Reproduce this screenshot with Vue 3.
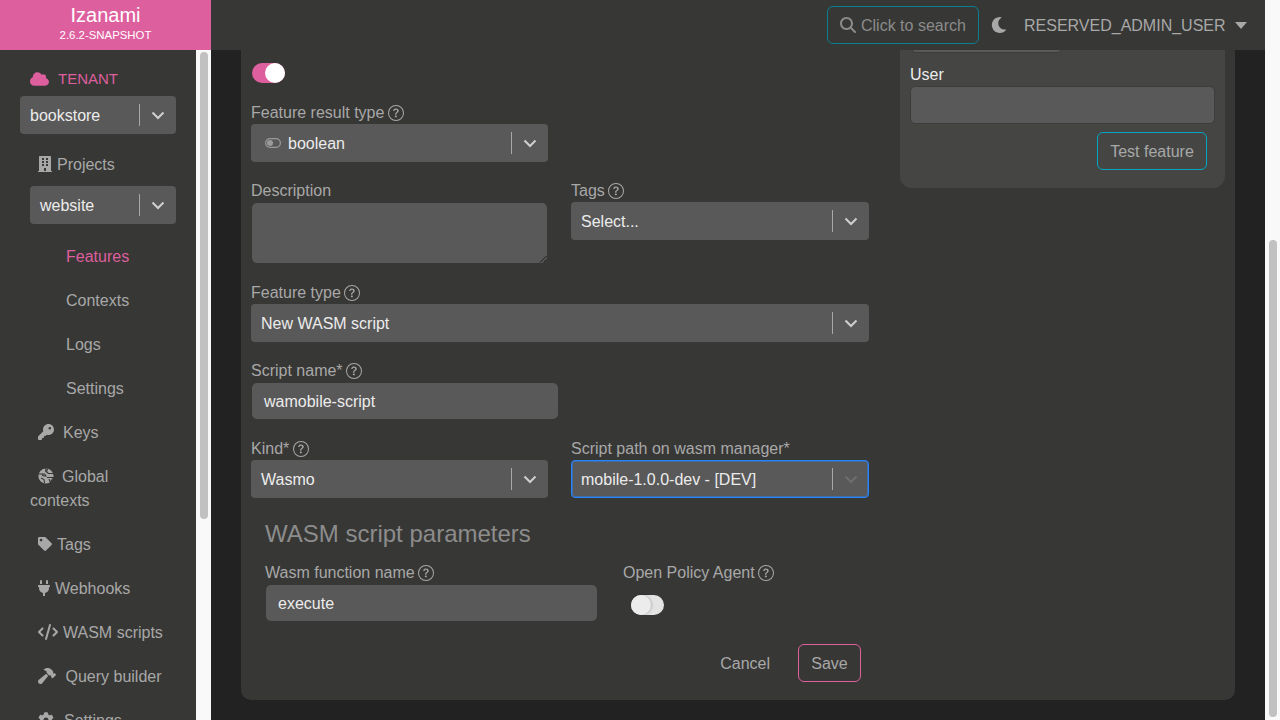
<script setup>
const ICONS = {
  building: { box: '0 0 448 512', d: 'M436 480h-20V24c0-13.255-10.745-24-24-24H56C42.745 0 32 10.745 32 24v456H12c-6.627 0-12 5.373-12 12v20h448v-20c0-6.627-5.373-12-12-12zM128 76c0-6.627 5.373-12 12-12h40c6.627 0 12 5.373 12 12v40c0 6.627-5.373 12-12 12h-40c-6.627 0-12-5.373-12-12V76zm0 96c0-6.627 5.373-12 12-12h40c6.627 0 12 5.373 12 12v40c0 6.627-5.373 12-12 12h-40c-6.627 0-12-5.373-12-12v-40zm52 148h-40c-6.627 0-12-5.373-12-12v-40c0-6.627 5.373-12 12-12h40c6.627 0 12 5.373 12 12v40c0 6.627-5.373 12-12 12zm76 160h-64v-84c0-6.627 5.373-12 12-12h40c6.627 0 12 5.373 12 12v84zm64-172c0 6.627-5.373 12-12 12h-40c-6.627 0-12-5.373-12-12v-40c0-6.627 5.373-12 12-12h40c6.627 0 12 5.373 12 12v40zm0-96c0 6.627-5.373 12-12 12h-40c-6.627 0-12-5.373-12-12v-40c0-6.627 5.373-12 12-12h40c6.627 0 12 5.373 12 12v40zm0-96c0 6.627-5.373 12-12 12h-40c-6.627 0-12-5.373-12-12V76c0-6.627 5.373-12 12-12h40c6.627 0 12 5.373 12 12v40z' },
  key: { box: '0 0 512 512', d: 'M336 352c97.2 0 176-78.8 176-176S433.2 0 336 0S160 78.8 160 176c0 18.7 2.9 36.8 8.3 53.7L7 391c-4.5 4.5-7 10.6-7 17v80c0 13.3 10.7 24 24 24h80c13.3 0 24-10.7 24-24V448h40c13.3 0 24-10.7 24-24V384h40c6.4 0 12.5-2.5 17-7l33.3-33.3c16.9 5.4 35 8.3 53.7 8.3zM376 96a40 40 0 1 1 0 80 40 40 0 1 1 0-80z' },
  tag: { box: '0 0 512 512', d: 'M0 252.118V48C0 21.49 21.49 0 48 0h204.118a48 48 0 0 1 33.941 14.059l211.882 211.882c18.745 18.745 18.745 49.137 0 67.882L293.823 497.941c-18.745 18.745-49.137 18.745-67.882 0L14.059 286.059A48 48 0 0 1 0 252.118zM112 64c-26.51 0-48 21.49-48 48s21.49 48 48 48 48-21.49 48-48-21.49-48-48-48z' },
  plug: { box: '0 0 384 512', d: 'M320,32a32,32,0,0,0-64,0v96h64Zm48,128H16A16,16,0,0,0,0,176v32a16,16,0,0,0,16,16H32v32A160.07,160.07,0,0,0,160,412.8V512h64V412.8A160.07,160.07,0,0,0,352,256V224h16a16,16,0,0,0,16-16V176A16,16,0,0,0,368,160ZM128,32a32,32,0,0,0-64,0v96h64Z' },
  code: { box: '0 0 640 512', d: 'M392.8 1.2c-17-4.9-34.7 5-39.6 22l-128 448c-4.9 17 5 34.7 22 39.6s34.7-5 39.6-22l128-448c4.9-17-5-34.7-22-39.6zm80.6 120.1c-12.5 12.5-12.5 32.8 0 45.3L562.7 256l-89.4 89.4c-12.5 12.5-12.5 32.8 0 45.3s32.8 12.5 45.3 0l112-112c12.5-12.5 12.5-32.8 0-45.3l-112-112c-12.5-12.5-32.8-12.5-45.3 0zm-306.7 0c-12.5-12.5-32.8-12.5-45.3 0l-112 112c-12.5 12.5-12.5 32.8 0 45.3l112 112c12.5 12.5 32.8 12.5 45.3 0s12.5-32.8 0-45.3L77.3 256l89.4-89.4c12.5-12.5 12.5-32.8 0-45.3z' },
  hammer: { box: '0 0 576 512', d: 'M413.5 237.5c-28.2 4.8-58.2-3.6-80-25.4l-38.1-38.1C280.4 159 272 138.8 272 117.6V105.5L192.3 62c-5.3-2.9-8.6-8.6-8.3-14.7s3.9-11.5 9.5-14l47.2-21C259.1 4.2 279 0 299.2 0h18.1c36.7 0 72 14 98.7 39.1l44.6 42c24.2 22.8 33.2 55.7 26.6 86L503 183l8-8c9.4-9.4 24.6-9.4 33.9 0l24 24c9.4 9.4 9.4 24.6 0 33.9l-88 88c-9.4 9.4-24.6 9.4-33.9 0l-24-24c-9.4-9.4-9.4-24.6 0-33.9l8-8-17.5-17.5zM27.4 377.1L260.9 182.6c3.5 4.9 7.5 9.6 11.8 14l38.1 38.1c6 6 12.4 11.2 19.2 15.7L134.9 484.6c-14.5 17.4-36 27.4-58.6 27.4C34.1 512 0 477.8 0 435.7c0-22.6 10.1-44.1 27.4-58.6z' },
  gear: { box: '0 0 512 512', d: 'M487.4 315.7l-42.6-24.6c4.3-23.2 4.3-47 0-70.2l42.6-24.6c4.9-2.8 7.1-8.6 5.5-14-11.1-35.6-30-67.8-54.7-94.6-3.8-4.1-10-5.1-14.8-2.3L380.8 110c-17.9-15.4-38.5-27.3-60.8-35.1V25.8c0-5.6-3.9-10.5-9.4-11.7-36.7-8.2-74.3-7.8-109.2 0-5.5 1.2-9.4 6.1-9.4 11.7V75c-22.2 7.9-42.8 19.8-60.8 35.1L88.7 85.5c-4.9-2.8-11-1.9-14.8 2.3-24.7 26.7-43.6 58.9-54.7 94.6-1.7 5.4.6 11.2 5.5 14L67.3 221c-4.3 23.2-4.3 47 0 70.2l-42.6 24.6c-4.9 2.8-7.1 8.6-5.5 14 11.1 35.6 30 67.8 54.7 94.6 3.8 4.1 10 5.1 14.8 2.3l42.6-24.6c17.9 15.4 38.5 27.3 60.8 35.1v49.2c0 5.6 3.9 10.5 9.4 11.7 36.7 8.2 74.3 7.8 109.2 0 5.5-1.2 9.4-6.1 9.4-11.7v-49.2c22.2-7.9 42.8-19.8 60.8-35.1l42.6 24.6c4.9 2.8 11 1.9 14.8-2.3 24.7-26.7 43.6-58.9 54.7-94.6 1.5-5.5-.7-11.3-5.6-14.1zM256 336c-44.1 0-80-35.9-80-80s35.9-80 80-80 80 35.9 80 80-35.9 80-80 80z' }
}

const cloud = 'M0 336c0 79.5 64.5 144 144 144H512c70.7 0 128-57.3 128-128c0-61.9-44-113.6-102.4-125.4c4.1-10.7 6.4-22.4 6.4-34.6c0-53-43-96-96-96c-19.7 0-38.1 6-53.3 16.2C367 64.2 315.3 32 256 32C167.6 32 96 103.6 96 192c0 2.7 .1 5.4 .2 8.1C40.2 219.8 0 273.2 0 336z'
const search = 'M416 208c0 45.9-14.9 88.3-40 122.7L502.6 457.4c12.5 12.5 12.5 32.8 0 45.3s-32.8 12.5-45.3 0L330.7 376c-34.4 25.2-76.8 40-122.7 40C93.1 416 0 322.9 0 208S93.1 0 208 0S416 93.1 416 208zM208 352a144 144 0 1 0 0-288 144 144 0 1 0 0 288z'
const moon = 'M283.211 512c78.962 0 151.079-35.925 198.857-94.792 7.068-8.708-.639-21.43-11.562-19.35-124.203 23.654-238.262-71.576-238.262-196.954 0-72.222 38.662-138.635 101.498-174.394 9.686-5.512 7.25-20.197-3.756-22.23A258.156 258.156 0 0 0 283.211 0c-141.309 0-256 114.511-256 256 0 141.309 114.511 256 256 256z'
const helpRing = 'M8 15A7 7 0 1 1 8 1a7 7 0 0 1 0 14zm0 1A8 8 0 1 0 8 0a8 8 0 0 0 0 16z'
const helpMark = 'M5.255 5.786a.237.237 0 0 0 .241.247h.825c.138 0 .248-.113.266-.25.09-.656.54-1.134 1.342-1.134.686 0 1.314.343 1.314 1.168 0 .635-.374.927-.965 1.371-.673.489-1.206 1.06-1.168 1.987l.003.217a.25.25 0 0 0 .25.246h.811a.25.25 0 0 0 .25-.25v-.105c0-.718.273-.927 1.01-1.486.609-.463 1.244-.977 1.244-2.056 0-1.511-1.276-2.241-2.673-2.241-1.267 0-2.655.59-2.75 2.286zm1.557 5.763c0 .533.425.927 1.01.927.609 0 1.028-.394 1.028-.927 0-.552-.42-.94-1.029-.94-.584 0-1.009.388-1.009.94z'

const subLinks = ['Features', 'Contexts', 'Logs', 'Settings']
const navLinks = [
  { label: 'Tags', icon: 'tag', gap: 5, small: true },
  { label: 'Webhooks', icon: 'plug', gap: 5 },
  { label: 'WASM scripts', icon: 'code', gap: 5 },
  { label: 'Query builder', icon: 'hammer', gap: 9.5 },
  { label: 'Settings', icon: 'gear', gap: 10 }
]
</script>

<template>
  <div class="page">
    <aside class="left">
      <div class="brand">
        <div class="brand-name">Izanami</div>
        <div class="brand-version">2.6.2-SNAPSHOT</div>
      </div>
      <div class="left-body">
        <nav class="nav">
          <div class="tenant-title">
            <svg class="cloud" viewBox="0 0 640 512"><path :d="cloud" /></svg>
            TENANT
          </div>
          <div class="select tenant-select">
            <span class="select-value">bookstore</span>
            <span class="select-sep"></span>
            <svg class="chevron" viewBox="0 0 20 20"><path d="M4.5 7.5 10 13l5.5-5.5" /></svg>
          </div>
          <a class="nav-item">
            <svg class="nav-icon" :viewBox="ICONS.building.box"><path :d="ICONS.building.d" /></svg>
            <span class="gap-5">Projects</span>
          </a>
          <div class="select project-select">
            <span class="select-value">website</span>
            <span class="select-sep"></span>
            <svg class="chevron" viewBox="0 0 20 20"><path d="M4.5 7.5 10 13l5.5-5.5" /></svg>
          </div>
          <div class="sub-links">
            <a v-for="(link, i) in subLinks" :key="link" class="sub-link" :class="{ active: i === 0 }">{{ link }}</a>
          </div>
          <a class="nav-item">
            <svg class="nav-icon" :viewBox="ICONS.key.box"><path :d="ICONS.key.d" /></svg>
            <span class="gap-9">Keys</span>
          </a>
          <a class="nav-item wrap">
            <svg class="nav-icon globe" viewBox="0 0 16 16">
              <circle cx="8" cy="8" r="7.6" />
              <path class="globe-cut" d="M1 6h5.5l1.5 2H5.5L4 6.5M9.5 1l-1 3 2 1.5h5M9 9.5h6.5l-3.2 4.6L11 11M3 10l3 1.5.5 3.5M7.8 0v4" />
            </svg><span class="gap-8">Global</span> contexts
          </a>
          <a v-for="link in navLinks" :key="link.label" class="nav-item">
            <svg class="nav-icon" :class="{ small: link.small }" :viewBox="ICONS[link.icon].box"><path :d="ICONS[link.icon].d" /></svg>
            <span :style="{ marginLeft: link.gap + 'px' }">{{ link.label }}</span>
          </a>
        </nav>
        <div class="scroll-track side-track"><div class="thumb side-thumb"></div></div>
      </div>
    </aside>

    <div class="right">
      <header class="topbar">
        <button class="search-btn">
          <svg class="search-icon" viewBox="0 0 512 512"><path :d="search" /></svg>
          Click to search
        </button>
        <svg class="moon" viewBox="0 0 512 512"><path :d="moon" /></svg>
        <span class="user">RESERVED_ADMIN_USER</span>
        <span class="caret"></span>
      </header>

      <main class="content">
        <div class="card">
          <form class="form" @submit.prevent>
            <span class="toggle on"><span class="knob"></span></span>

            <label class="label first">Feature result type
              <svg class="help" viewBox="0 0 16 16"><path :d="helpRing" /><path :d="helpMark" /></svg>
            </label>
            <div class="half">
              <div class="select">
                <svg class="toggle-icon" viewBox="0 0 16 10">
                  <rect x="0.6" y="0.6" width="14.8" height="8.8" rx="4.4" />
                  <circle cx="5" cy="5" r="3" />
                </svg>
                <span class="select-value">boolean</span>
                <span class="select-sep"></span>
                <svg class="chevron" viewBox="0 0 20 20"><path d="M4.5 7.5 10 13l5.5-5.5" /></svg>
              </div>
            </div>

            <div class="two-cols row-desc">
              <div>
                <label class="label">Description</label>
                <div class="textarea">
                  <svg class="grip" viewBox="0 0 8 8"><path d="M7.5 1 1 7.5M7.5 4.5 4.5 7.5" /></svg>
                </div>
              </div>
              <div>
                <label class="label">Tags
                  <svg class="help" viewBox="0 0 16 16"><path :d="helpRing" /><path :d="helpMark" /></svg>
                </label>
                <div class="select">
                  <span class="select-value">Select...</span>
                  <span class="select-sep"></span>
                  <svg class="chevron" viewBox="0 0 20 20"><path d="M4.5 7.5 10 13l5.5-5.5" /></svg>
                </div>
              </div>
            </div>

            <label class="label row-type">Feature type
              <svg class="help" viewBox="0 0 16 16"><path :d="helpRing" /><path :d="helpMark" /></svg>
            </label>
            <div class="select">
              <span class="select-value">New WASM script</span>
              <span class="select-sep"></span>
              <svg class="chevron" viewBox="0 0 20 20"><path d="M4.5 7.5 10 13l5.5-5.5" /></svg>
            </div>

            <label class="label row-name">Script name*
              <svg class="help" viewBox="0 0 16 16"><path :d="helpRing" /><path :d="helpMark" /></svg>
            </label>
            <div class="input name-input">wamobile-script</div>

            <div class="two-cols row-kind">
              <div>
                <label class="label">Kind*
                  <svg class="help" viewBox="0 0 16 16"><path :d="helpRing" /><path :d="helpMark" /></svg>
                </label>
                <div class="select">
                  <span class="select-value">Wasmo</span>
                  <span class="select-sep"></span>
                  <svg class="chevron" viewBox="0 0 20 20"><path d="M4.5 7.5 10 13l5.5-5.5" /></svg>
                </div>
              </div>
              <div>
                <label class="label">Script path on wasm manager*</label>
                <div class="select focused">
                  <span class="select-value">mobile-1.0.0-dev - [DEV]</span>
                  <span class="select-sep"></span>
                  <svg class="chevron dim" viewBox="0 0 20 20"><path d="M4.5 7.5 10 13l5.5-5.5" /></svg>
                </div>
              </div>
            </div>

            <fieldset class="params">
              <h5 class="params-title">WASM script parameters</h5>
              <div class="params-row">
                <div class="param-fn">
                  <label class="label">Wasm function name
                    <svg class="help" viewBox="0 0 16 16"><path :d="helpRing" /><path :d="helpMark" /></svg>
                  </label>
                  <div class="input fn-input">execute</div>
                </div>
                <div>
                  <label class="label">Open Policy Agent
                    <svg class="help" viewBox="0 0 16 16"><path :d="helpRing" /><path :d="helpMark" /></svg>
                  </label>
                  <span class="toggle off"><span class="knob"></span></span>
                </div>
              </div>
            </fieldset>

            <div class="actions">
              <button class="btn-cancel" type="button">Cancel</button>
              <button class="btn-save" type="submit">Save</button>
            </div>
          </form>

          <section class="test-panel">
            <div class="input cut-input"></div>
            <label class="user-label">User</label>
            <div class="input user-input"></div>
            <div class="test-actions">
              <button class="btn-test" type="button">Test feature</button>
            </div>
          </section>
        </div>
      </main>
    </div>

    <div class="scroll-track body-track"><div class="thumb body-thumb"></div></div>
  </div>
</template>

<style>
html,
body {
  margin: 0;
  overflow: hidden;
}
</style>

<style scoped>
.page {
  display: flex;
  width: 1280px;
  height: 720px;
  overflow: hidden;
  background: #222222;
  font-family: 'Liberation Sans', Arial, sans-serif;
  font-size: 16px;
  line-height: 24px;
  color: #a8a8a8;
}
.left {
  width: 211px;
  flex: none;
  display: flex;
  flex-direction: column;
}
.brand {
  height: 50px;
  background: #de5f9e;
  color: #fff;
  text-align: center;
}
.brand-name {
  font-size: 20px;
  line-height: 24px;
  padding-top: 3px;
}
.brand-version {
  font-size: 11.4px;
  line-height: 14px;
  margin-top: 1px;
}
.left-body {
  flex: 1;
  min-height: 0;
  display: flex;
}
.nav {
  width: 196px;
  background: #373735;
  padding: 17px 20px 0 20px;
  box-sizing: border-box;
  overflow: hidden;
}
.tenant-title {
  display: flex;
  align-items: center;
  height: 24px;
  padding-left: 10px;
  color: #de5f9e;
  margin-bottom: 5px;
  font-size: 15px;
}
.cloud {
  width: 19px;
  height: 16px;
  fill: #de5f9e;
  margin-right: 9px;
}
.select {
  display: flex;
  align-items: center;
  height: 38px;
  box-sizing: border-box;
  background: #595959;
  border-radius: 4px;
  padding-left: 10px;
  color: #ececec;
}
.select-value {
  flex: 1;
  white-space: nowrap;
  padding-top: 2px;
}
.select-sep {
  width: 1px;
  height: 22px;
  background: #a8a8a8;
  flex: none;
}
.chevron {
  width: 20px;
  height: 20px;
  margin: 0 8.5px 0 7.5px;
  flex: none;
  fill: none;
  stroke: #cfcfcf;
  stroke-width: 2;
}
.chevron.dim {
  stroke: #6e6e6e;
}
.tenant-select {
  margin-bottom: 8px;
}
.project-select {
  margin-left: 10px;
}
.nav-item {
  display: block;
  padding: 11px 0 9px 18px;
  color: #a8a8a8;
}
.nav-item.wrap {
  padding-left: 10px;
  padding-right: 30px;
  text-indent: 8px;
}
.nav-icon {
  height: 16px;
  width: auto;
  vertical-align: -2px;
  fill: #a8a8a8;
}
.nav-icon.small {
  height: 14px;
  vertical-align: -1px;
}
.globe-cut {
  fill: none;
  stroke: #373735;
  stroke-width: 1.1;
}
.gap-5 {
  margin-left: 5px;
}
.gap-8 {
  margin-left: 8px;
}
.gap-9 {
  margin-left: 9px;
}
.sub-links {
  display: flex;
  flex-direction: column;
  margin-top: 10px;
}
.sub-link {
  padding: 11px 0 9px 46px;
  color: #a8a8a8;
}
.sub-link.active {
  color: #de5f9e;
}
.scroll-track {
  width: 15px;
  flex: none;
  background: #f9f9f9;
  box-sizing: border-box;
}
.thumb {
  width: 8px;
  margin-left: 4px;
  background: #c1c1c1;
  border-radius: 4px;
}
.side-track {
  padding-top: 2px;
}
.side-thumb {
  height: 467px;
}
.body-track {
  padding-top: 240px;
}
.body-thumb {
  height: 477px;
}
.right {
  width: 1054px;
  flex: none;
  display: flex;
  flex-direction: column;
}
.topbar {
  height: 50px;
  flex: none;
  background: #373735;
  display: flex;
  align-items: center;
  position: relative;
  z-index: 1;
  padding-left: 616px;
}
.search-btn {
  display: flex;
  align-items: center;
  width: 152px;
  height: 38px;
  box-sizing: border-box;
  background: transparent;
  border: 1px solid #0a7f92;
  border-radius: 6px;
  padding: 2px 0 0 12px;
  font: inherit;
  color: #8b8b8b;
  white-space: nowrap;
}
.search-icon {
  width: 16px;
  height: 16px;
  fill: #8b8b8b;
  margin: -2px 5px 0 0;
}
.moon {
  width: 16px;
  height: 16px;
  fill: #a8a8a8;
  margin-left: 12px;
}
.user {
  margin-left: 17px;
  padding-top: 2px;
  color: #a8a8a8;
  white-space: nowrap;
}
.caret {
  width: 0;
  height: 0;
  margin-left: 9px;
  border-left: 6.5px solid transparent;
  border-right: 6.5px solid transparent;
  border-top: 7px solid #a8a8a8;
}
.content {
  flex: 1;
  min-height: 0;
  overflow: hidden;
  display: flex;
  flex-direction: column;
  justify-content: flex-end;
  padding: 0 30px 20px;
}
.card {
  flex: none;
  display: flex;
  align-items: flex-start;
  background: #373735;
  border-radius: 10px;
  padding: 63px 10px 18px;
  height: 700px;
  box-sizing: border-box;
}
.form {
  width: 618px;
  flex: none;
}
.toggle {
  display: block;
  position: relative;
  width: 33px;
  height: 20px;
  border-radius: 10px;
  margin-left: 1px;
}
.toggle.on {
  background: #de5f9e;
}
.toggle.off {
  background: #e4e4e4;
  margin-left: 8px;
  margin-top: 11px;
}
.knob {
  position: absolute;
  top: 0;
  width: 20px;
  height: 20px;
  border-radius: 50%;
}
.toggle.on .knob {
  right: 0;
  background: #fff;
}
.toggle.off .knob {
  left: 0;
  background: #ececec;
  box-shadow: 1px 0 3px rgba(0, 0, 0, 0.2);
}
.label {
  display: block;
  height: 24px;
  line-height: 26px;
  white-space: nowrap;
  color: #a8a8a8;
}
.label.first {
  margin-top: 17px;
}
.help {
  width: 16px;
  height: 16px;
  vertical-align: -2.5px;
  fill: #a8a8a8;
  margin-left: -1px;
}
.half {
  width: 297px;
}
.toggle-icon {
  width: 16px;
  height: 10px;
  margin: 0 7px 0 4px;
  fill: none;
}
.toggle-icon rect {
  stroke: #9a9a9a;
  stroke-width: 1.2;
}
.toggle-icon circle {
  fill: #9a9a9a;
}
.two-cols {
  display: grid;
  grid-template-columns: 297px 298px;
  column-gap: 23px;
}
.row-desc {
  margin-top: 16px;
  height: 90px;
}
.textarea {
  position: relative;
  width: 295px;
  height: 60px;
  margin: 1px 0 0 1px;
  background: #595959;
  border-radius: 5px;
}
.grip {
  position: absolute;
  right: 0;
  bottom: 0;
  width: 8px;
  height: 8px;
  fill: none;
  stroke: #1e1e1e;
  stroke-width: 1;
}
.row-type {
  margin-top: 12px;
}
.input {
  display: flex;
  align-items: center;
  height: 36px;
  background: #595959;
  border-radius: 5px;
  padding: 2px 0 0 12px;
  box-sizing: border-box;
  color: #ececec;
}
.row-name {
  margin-top: 16px;
}
.name-input {
  width: 306px;
  margin: 1px 0 0 1px;
}
.row-kind {
  margin-top: 17px;
}
.focused {
  border: 1px solid #2684ff;
  outline: 1px solid rgba(38, 132, 255, 0.45);
  outline-offset: -2px;
  padding-left: 9px;
}
.focused .chevron {
  margin-right: 7.5px;
}
.params {
  border: 0;
  margin: 18px 0 0;
  padding: 0 0 0 14px;
}
.params-title {
  margin: 0;
  font-size: 24px;
  line-height: 36px;
  font-weight: 400;
  color: #8c8c8c;
}
.params-row {
  display: flex;
  margin-top: 8px;
}
.param-fn {
  width: 358px;
}
.fn-input {
  width: 331px;
  margin: 1px 0 0 1px;
}
.actions {
  display: flex;
  justify-content: flex-end;
  align-items: center;
  margin-top: 23px;
  padding-right: 8px;
}
.btn-cancel {
  background: none;
  border: 0;
  padding: 2px 0 0;
  font: inherit;
  color: #a8a8a8;
  margin-right: 28px;
}
.btn-save {
  width: 63px;
  height: 38px;
  box-sizing: border-box;
  background: transparent;
  border: 1px solid #de5f9e;
  border-radius: 6px;
  padding: 2px 0 0;
  font: inherit;
  color: #a8a8a8;
}
.test-panel {
  width: 325px;
  flex: none;
  margin-left: 31px;
  margin-top: -63px;
  height: 188px;
  box-sizing: border-box;
  background: #454544;
  border-radius: 0 0 12px 12px;
  padding: 0 10px 18px;
  display: flex;
  flex-direction: column;
  justify-content: flex-end;
}
.cut-input {
  width: 151px;
  margin: 0 0 9px 1px;
  flex: none;
  border: 1px solid #3c3c3c;
}
.user-label {
  color: #ececec;
  line-height: 26px;
  height: 24px;
}
.user-input {
  background: #595959;
  border: 1px solid #3c3c3c;
  height: 38px;
  margin-bottom: 8px;
  flex: none;
}
.test-actions {
  display: flex;
  justify-content: flex-end;
  padding-right: 8px;
}
.btn-test {
  width: 110px;
  height: 38px;
  box-sizing: border-box;
  background: transparent;
  border: 1px solid #00a8c6;
  border-radius: 6px;
  padding: 2px 0 0;
  font: inherit;
  color: #a8a8a8;
}
</style>
